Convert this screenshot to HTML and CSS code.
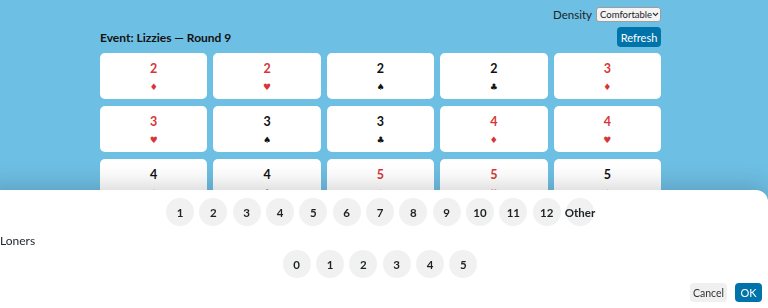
FILE: index.html
```html
<!DOCTYPE html>
<html>
<head>
<meta charset="utf-8">
<link rel="stylesheet" href="styles.css">
</head>
<body>
<div class="page">
  <div class="toolbar">
    <label class="density-label">Density</label>
    <div class="select"><span>Comfortable</span><span class="chev"><svg width="7" height="5" viewBox="0 0 7 5"><path d="M1 1l2.5 2.5L6 1" fill="none" stroke="#333" stroke-width="1.1"/></svg></span></div>
  </div>
  <div class="titlebar">
    <h1 class="title">Event: Lizzies — Round 9</h1>
    <button class="btn-primary refresh">Refresh</button>
  </div>
  <div class="grid">
    <div class="card red"><div class="rank">2</div><div class="suit">♦</div></div>
    <div class="card red"><div class="rank">2</div><div class="suit">♥</div></div>
    <div class="card"><div class="rank">2</div><div class="suit">♠</div></div>
    <div class="card"><div class="rank">2</div><div class="suit">♣</div></div>
    <div class="card red"><div class="rank">3</div><div class="suit">♦</div></div>
    <div class="card red"><div class="rank">3</div><div class="suit">♥</div></div>
    <div class="card"><div class="rank">3</div><div class="suit">♠</div></div>
    <div class="card"><div class="rank">3</div><div class="suit">♣</div></div>
    <div class="card red"><div class="rank">4</div><div class="suit">♦</div></div>
    <div class="card red"><div class="rank">4</div><div class="suit">♥</div></div>
    <div class="card"><div class="rank">4</div><div class="suit">♠</div></div>
    <div class="card"><div class="rank">4</div><div class="suit">♣</div></div>
    <div class="card red"><div class="rank">5</div><div class="suit">♦</div></div>
    <div class="card red"><div class="rank">5</div><div class="suit">♥</div></div>
    <div class="card"><div class="rank">5</div><div class="suit">♠</div></div>
  </div>
</div>
<div class="sheet">
  <div class="chips">
    <span class="chip">1</span><span class="chip">2</span><span class="chip">3</span><span class="chip">4</span><span class="chip">5</span><span class="chip">6</span><span class="chip">7</span><span class="chip">8</span><span class="chip">9</span><span class="chip">10</span><span class="chip">11</span><span class="chip">12</span><span class="chip">Other</span>
  </div>
  <div class="section-label">Loners</div>
  <div class="chips">
    <span class="chip">0</span><span class="chip">1</span><span class="chip">2</span><span class="chip">3</span><span class="chip">4</span><span class="chip">5</span>
  </div>
  <div class="footer">
    <button class="btn-secondary">Cancel</button>
    <button class="btn-primary ok">OK</button>
  </div>
</div>
</body>
</html>
```
FILE: styles.css
```css
* { box-sizing: border-box; }
html, body { margin: 0; padding: 0; }
body {
  background: #6ebfe4;
  font-family: Lato, "Noto Sans", sans-serif;
  color: #1d2327;
  height: 308px;
  overflow: hidden;
}
.page {
  width: 561px;
  margin-left: 100px;
  padding-top: 7px;
}
.toolbar {
  display: flex;
  justify-content: flex-end;
  align-items: center;
  gap: 4px;
  height: 15px;
}
.density-label {
  font-size: 11.5px;
  color: #1d2327;
}
.select {
  flex-shrink: 0;
  height: 15px;
  width: 65px;
  background: #f4f4f4;
  border: 1px solid #9a9da2;
  border-radius: 3px;
  font-size: 9.5px;
  line-height: 13px;
  padding: 0 4px 0 3px;
  display: flex;
  align-items: center;
  justify-content: space-between;
  color: #1d2327;
  white-space: nowrap;
}
.chev { display: flex; align-items: center; }
.titlebar {
  display: flex;
  justify-content: space-between;
  align-items: center;
  margin-top: 5px;
  height: 20px;
}
.title {
  margin: 0;
  font-size: 12px;
  font-weight: 700;
  color: #111;
}
.btn-primary {
  background: #0073aa;
  color: #fff;
  border: 0;
  border-radius: 4px;
  font-family: inherit;
  font-size: 11px;
  padding: 0;
}
.refresh { width: 44px; height: 20px; }
.grid {
  margin-top: 6px;
  display: grid;
  grid-template-columns: repeat(5, 1fr);
  column-gap: 6px;
  row-gap: 7px;
}
.card {
  background: #fff;
  border-radius: 5px;
  height: 46px;
  text-align: center;
  color: #111;
  padding-top: 8px;
}
.card.red { color: #d63638; }
.rank {
  font-size: 12.5px;
  font-weight: 700;
  line-height: 16px;
}
.suit {
  font-family: "DejaVu Sans", sans-serif;
  font-size: 9px;
  line-height: 12px;
  margin-top: 4px;
}
.sheet {
  position: fixed;
  left: -16px;
  right: 0;
  top: 190px;
  bottom: 0;
  background: #fff;
  border-top-right-radius: 12px;
  box-shadow: 0 -4px 24px rgba(0, 0, 0, 0.18);
  padding: 8px 8px 0 16px;
}
.chips {
  display: flex;
  justify-content: center;
  gap: 5.33px;
}
.chip {
  width: 28px;
  height: 28px;
  border-radius: 50%;
  background: #f1f1f1;
  display: flex;
  align-items: center;
  justify-content: center;
  font-size: 11.5px;
  font-weight: 700;
  color: #1d2327;
  white-space: nowrap;
}
.section-label {
  margin-top: 7px;
  height: 17px;
  font-size: 12px;
  line-height: 16px;
  color: #1d2327;
}
.footer {
  display: flex;
  justify-content: flex-end;
  gap: 8px;
  margin-top: 5px;
  margin-right: -2px;
}
.btn-secondary {
  background: #f0f0f1;
  color: #333;
  border: 0;
  border-radius: 4px;
  font-family: inherit;
  font-size: 10.5px;
  width: 37px;
  height: 19px;
  padding: 0;
}
.ok { width: 27px; height: 19px; }
```
